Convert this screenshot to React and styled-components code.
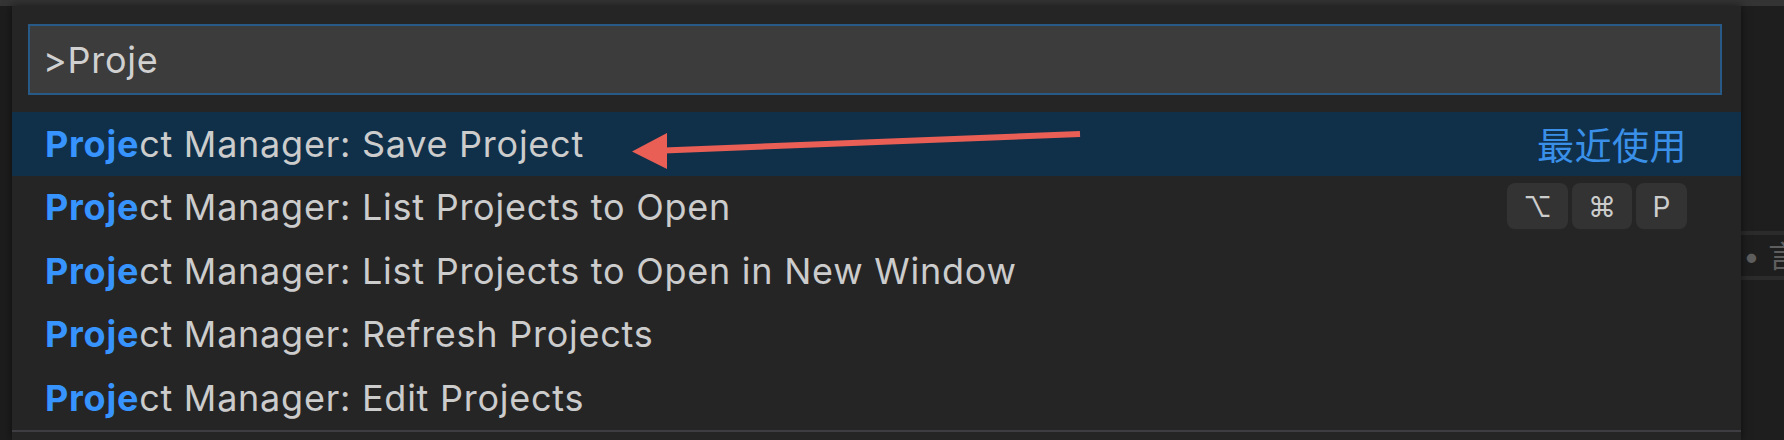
import React from 'react';
import styled, { createGlobalStyle } from 'styled-components';

const GlobalStyle = createGlobalStyle`
    body {
        margin: 0;
        background: #1e1e1e;
        font-family: Inter, "Noto Sans", sans-serif;
    }
`

const Page = styled.div`
    width: 1784px;
    height: 440px;
    overflow: hidden;
    display: flex;
    flex-direction: column;
    background: #1e1e1e;
`

const TopBar = styled.div`
    height: 6px;
    background: #343434;
    flex-shrink: 0;
`

const Body = styled.div`
    flex: 1;
    display: flex;
    min-height: 0;
`

const Gutter = styled.div`
    width: 12px;
    flex-shrink: 0;
    background: #1d1d1d;
`

const Palette = styled.div`
    position: relative;
    z-index: 1;
    width: 1729px;
    flex-shrink: 0;
    background: #252526;
    box-shadow: 0 0 9px rgba(0, 0, 0, 0.55);
    display: flex;
    flex-direction: column;
`

const InputWrap = styled.div`
    padding: 18px 19px 0 16px;
`

const InputBox = styled.div`
    height: 67px;
    box-sizing: content-box;
    border: 2px solid #285a87;
    background: #3c3c3c;
    display: flex;
    align-items: center;
    padding: 0 13px;
    color: #d0d0d0;
    font-size: 36px;
    letter-spacing: 0.75px;
`

const List = styled.div`
    margin-top: 17px;
    display: flex;
    flex-direction: column;
`

const Row = styled.div`
    position: relative;
    height: 63.5px;
    display: flex;
    align-items: center;
    justify-content: space-between;
    padding: 0 54px 0 33px;
    background: ${p => p.selected ? '#10304a' : 'transparent'};
    color: #cccccc;
    font-size: 36px;
    letter-spacing: 0.75px;
    white-space: nowrap;
`

const Highlight = styled.span`
    color: #3794ff;
    font-weight: 700;
`

const Recent = styled.span`
    color: #3a90e8;
    font-size: 37px;
    letter-spacing: 0.5px;
    font-family: "Noto Sans CJK SC", sans-serif;
`

const Keys = styled.div`
    display: flex;
    gap: 4px;
`

const Key = styled.span`
    box-sizing: border-box;
    min-width: 51px;
    height: 48px;
    padding: 0 16px;
    display: flex;
    align-items: center;
    justify-content: center;
    border-radius: 8px;
    background: #333334;
    box-shadow: inset 0 -2px 0 rgba(0, 0, 0, 0.25);
    color: #cccccc;
    font-size: 28px;
    letter-spacing: 0;
    font-family: Inter, "DejaVu Sans", sans-serif;
`

const Arrow = styled.svg`
    position: absolute;
    left: 0;
    top: 0;
    overflow: visible;
    pointer-events: none;
`

const Divider = styled.div`
    margin-top: auto;
    height: 2px;
    background: #3d3d42;
    margin-bottom: 8px;
`

const Backdrop = styled.div`
    flex: 1;
    position: relative;
    background: #1e1e1e;
    overflow: hidden;
`

const BackLine = styled.div`
    position: absolute;
    left: 0;
    right: 0;
    top: ${p => p.top}px;
    height: 4px;
    background: #2b2b2b;
`

const BackText = styled.span`
    position: absolute;
    left: 2px;
    top: 226px;
    color: #5e5e5e;
    font-size: 30px;
    white-space: nowrap;
    font-family: Inter, "Noto Sans CJK SC", sans-serif;
`

const rows = [
    { rest: 'ct Manager: Save Project', selected: true, recent: true },
    { rest: 'ct Manager: List Projects to Open', keys: ['⌥', '⌘', 'P'] },
    { rest: 'ct Manager: List Projects to Open in New Window' },
    { rest: 'ct Manager: Refresh Projects' },
    { rest: 'ct Manager: Edit Projects' },
]

const App = () => (
    <Page>
        <GlobalStyle />
        <TopBar />
        <Body>
            <Gutter />
            <Palette>
                <InputWrap>
                    <InputBox>&gt;Proje</InputBox>
                </InputWrap>
                <List>
                    {rows.map((r, i) => (
                        <Row key={i} selected={r.selected}>
                            <span><Highlight>Proje</Highlight>{r.rest}</span>
                            {r.recent && <Recent>最近使用</Recent>}
                            {r.keys && (
                                <Keys>
                                    {r.keys.map(k => <Key key={k}>{k}</Key>)}
                                </Keys>
                            )}
                            {r.selected && (
                                <Arrow width="1100" height="64">
                                    <line x1="652" y1="38.5" x2="1068" y2="22" stroke="#ea5f55" strokeWidth="6" />
                                    <polygon points="620,39.5 655,21 655,57" fill="#ea5f55" />
                                </Arrow>
                            )}
                        </Row>
                    ))}
                </List>
                <Divider />
            </Palette>
            <Backdrop>
                <BackLine top={225} />
                <BackLine top={270} />
                <BackText>• 言</BackText>
            </Backdrop>
        </Body>
    </Page>
)

export default App;
